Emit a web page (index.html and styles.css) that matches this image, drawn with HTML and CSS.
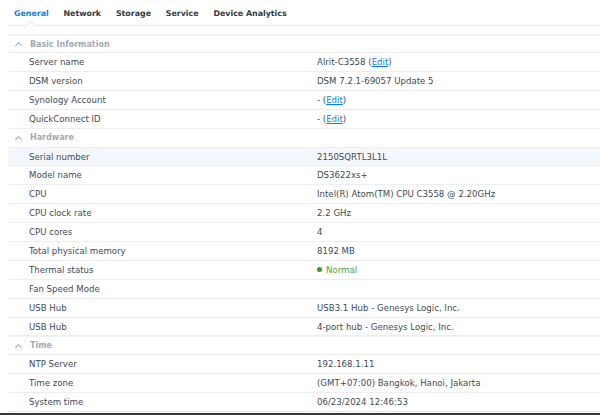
FILE: index.html
```html
<!DOCTYPE html>
<html>
<head>
<meta charset="utf-8">
<link rel="stylesheet" href="styles.css">
</head>
<body>
<div class="window">
  <div class="tabs">
    <div class="tab active">General<span class="notch"></span></div>
    <div class="tab">Network</div>
    <div class="tab">Storage</div>
    <div class="tab">Service</div>
    <div class="tab">Device Analytics</div>
  </div>
  <div class="content">
    <div class="section first">
      <div class="header"><span class="chev"></span>Basic Information</div>
      <div class="row"><span class="label">Server name</span><span class="value">Alrit-C3558 (<a class="link">Edit</a>)</span></div>
      <div class="row"><span class="label">DSM version</span><span class="value">DSM 7.2.1-69057 Update 5</span></div>
      <div class="row"><span class="label">Synology Account</span><span class="value">- (<a class="link">Edit</a>)</span></div>
      <div class="row"><span class="label">QuickConnect ID</span><span class="value">- (<a class="link">Edit</a>)</span></div>
    </div>
    <div class="section">
      <div class="header"><span class="chev"></span>Hardware</div>
      <div class="row hover"><span class="label">Serial number</span><span class="value">2150SQRTL3L1L</span></div>
      <div class="row"><span class="label">Model name</span><span class="value">DS3622xs+</span></div>
      <div class="row"><span class="label">CPU</span><span class="value">Intel(R) Atom(TM) CPU C3558 @ 2.20GHz</span></div>
      <div class="row"><span class="label">CPU clock rate</span><span class="value">2.2 GHz</span></div>
      <div class="row"><span class="label">CPU cores</span><span class="value">4</span></div>
      <div class="row"><span class="label">Total physical memory</span><span class="value">8192 MB</span></div>
      <div class="row"><span class="label">Thermal status</span><span class="value ok"><span class="dot"></span>Normal</span></div>
      <div class="row"><span class="label">Fan Speed Mode</span><span class="value"></span></div>
      <div class="row"><span class="label">USB Hub</span><span class="value">USB3.1 Hub - Genesys Logic, Inc.</span></div>
      <div class="row"><span class="label">USB Hub</span><span class="value">4-port hub - Genesys Logic, Inc.</span></div>
    </div>
    <div class="section thick">
      <div class="header"><span class="chev"></span>Time</div>
      <div class="row"><span class="label">NTP Server</span><span class="value">192.168.1.11</span></div>
      <div class="row"><span class="label">Time zone</span><span class="value">(GMT+07:00) Bangkok, Hanoi, Jakarta</span></div>
      <div class="row"><span class="label">System time</span><span class="value">06/23/2024 12:46:53</span></div>
    </div>
  </div>
</div>
<div class="desk"></div>
</body>
</html>
```
FILE: styles.css
```css
html, body {
  margin: 0;
  padding: 0;
  background: #ffffff;
  overflow: hidden;
}
body {
  width: 600px;
  height: 415px;
  display: flex;
  flex-direction: column;
  font-family: "DejaVu Sans", Verdana, sans-serif;
  font-size: 8.6px;
  color: #414b55;
}
.window {
  flex: 1;
  overflow: hidden;
}
.desk {
  height: 2px;
  background: #3d3a36;
}
.tabs {
  display: flex;
  height: 26px;
  border-bottom: 1px solid #e5e8ec;
  box-sizing: border-box;
  margin-left: 8px;
  padding-left: 6px;
}
.tab {
  position: relative;
  font-weight: bold;
  color: #2f3a45;
  font-size: 7.9px;
  line-height: 26px;
  padding-top: 1px;
  box-sizing: border-box;
  height: 25px;
  margin-right: 14.8px;
}
.tab.active {
  color: #0a7fe0;
}
.notch {
  position: absolute;
  left: 14px;
  bottom: -4px;
  width: 6px;
  height: 6px;
  background: #fff;
  border-top: 1px solid #e5e8ec;
  border-left: 1px solid #e5e8ec;
  transform: rotate(45deg);
}
.content {
  margin-left: 8px;
  margin-top: 8px;
}
.section.first .header {
  border-top: 2px solid #eef3f8;
}
.section.thick .header {
  border-top: 1px solid #eef0f3;
}
.header {
  height: 19px;
  display: flex;
  align-items: center;
  border-bottom: 1px solid #eceef1;
  box-sizing: border-box;
  color: #a3aab2;
  font-weight: bold;
  font-size: 8px;
  padding-left: 8px;
}
.chev {
  width: 4px;
  height: 4px;
  border-top: 1px solid #a3aab2;
  border-left: 1px solid #a3aab2;
  transform: rotate(45deg);
  margin-top: 3px;
  margin-right: 9px;
}
.row {
  display: grid;
  grid-template-columns: 309px 1fr;
  height: 18.9px;
  align-items: center;
  border-bottom: 1px solid #eceef1;
  box-sizing: border-box;
}
.row.hover {
  background: #f4f8fd;
}
.label {
  padding-left: 21px;
}
.link {
  color: #0a7fe0;
  text-decoration: underline;
}
.ok {
  color: #4aa845;
  display: flex;
  align-items: center;
}
.dot {
  width: 5px;
  height: 5px;
  border-radius: 50%;
  background: #3a9a2e;
  margin-right: 4px;
}
```
